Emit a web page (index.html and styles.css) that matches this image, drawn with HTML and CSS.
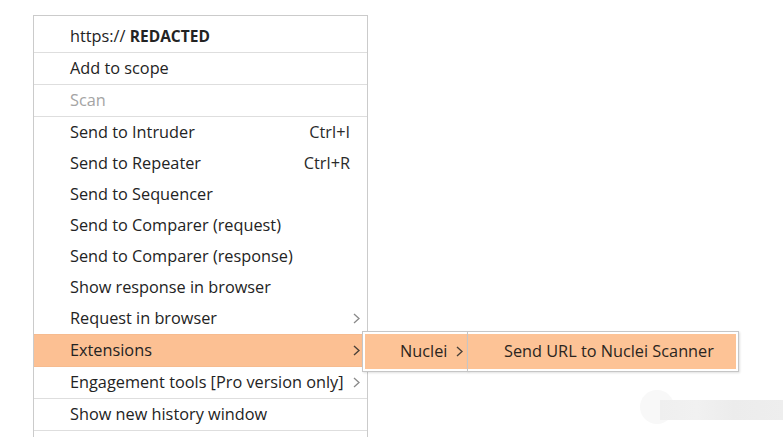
FILE: index.html
```html
<!DOCTYPE html>
<html lang="en">
<head>
<meta charset="utf-8">
<title>Context menu</title>
<link rel="stylesheet" href="styles.css">
</head>
<body>
<div class="menu">
  <div class="item sep"><span class="label">https:// <b class="redacted">REDACTED</b></span></div>
  <div class="item sep"><span class="label">Add to scope</span></div>
  <div class="item sep disabled"><span class="label">Scan</span></div>
  <div class="item"><span class="label">Send to Intruder</span><span class="key">Ctrl+I</span></div>
  <div class="item"><span class="label">Send to Repeater</span><span class="key">Ctrl+R</span></div>
  <div class="item"><span class="label">Send to Sequencer</span></div>
  <div class="item"><span class="label">Send to Comparer (request)</span></div>
  <div class="item"><span class="label">Send to Comparer (response)</span></div>
  <div class="item"><span class="label">Show response in browser</span></div>
  <div class="item sep"><span class="label">Request in browser</span><span class="key"></span><span class="arrow"><svg width="7" height="11" viewBox="0 0 7 11"><polyline points="1,1 6,5.5 1,10" fill="none" stroke="#8a8a8a" stroke-width="1.3"/></svg></span></div>
  <div class="item sep active"><span class="label">Extensions</span><span class="key"></span><span class="arrow"><svg width="7" height="11" viewBox="0 0 7 11"><polyline points="1,1 6,5.5 1,10" fill="none" stroke="#4a4038" stroke-width="1.4"/></svg></span>
    <div class="submenu sub1">
      <div class="subitem"><span>Nuclei</span><svg class="subarrow" width="7" height="11" viewBox="0 0 7 11"><polyline points="1,1 6,5.5 1,10" fill="none" stroke="#4a4038" stroke-width="1.4"/></svg></div>
    </div>
    <div class="submenu sub2">
      <div class="subitem wide"><span>Send URL to Nuclei Scanner</span></div>
    </div>
  </div>
  <div class="item sep"><span class="label">Engagement tools [Pro version only]</span><span class="key"></span><span class="arrow"><svg width="7" height="11" viewBox="0 0 7 11"><polyline points="1,1 6,5.5 1,10" fill="none" stroke="#8a8a8a" stroke-width="1.3"/></svg></span></div>
  <div class="item sep"><span class="label">Show new history window</span></div>
  <div class="item tail"></div>
</div>
<div class="watermark"><span class="wm-dot"></span><span class="wm-bar"></span></div>
</body>
</html>
```
FILE: styles.css
```css
html, body {
  margin: 0;
  padding: 0;
  background: #ffffff;
  overflow: hidden;
  height: 437px;
}
body {
  font-family: "Open Sans", "Noto Sans", sans-serif;
  font-size: 16.3px;
  color: #232323;
  position: relative;
}
.menu {
  margin: 15px 0 0 33px;
  width: 333px;
  border: 1px solid #cbcbcb;
  border-bottom: none;
  padding-top: 5px;
  background: #ffffff;
  display: flex;
  flex-direction: column;
}
.item {
  position: relative;
  height: 31px;
  line-height: 31px;
  display: grid;
  grid-template-columns: 1fr auto 17px;
  padding-left: 36px;
  white-space: nowrap;
}
.item.tail {
  height: 8px;
}
.item.sep {
  border-bottom: 1px solid #dedede;
}
.item.disabled {
  color: #a4a4a4;
}
.item.active {
  background: #fcc093;
  border-bottom-color: #f6bb8f;
  box-shadow: 0 -1px 0 #f6bb8f;
}
.redacted {
  font-weight: 700;
  font-size: 15.5px;
}
.key {
  text-align: right;
  color: #2a2a2a;
}
.arrow {
  display: flex;
  align-items: center;
  padding-left: 3px;
}
.submenu {
  position: absolute;
  top: -4px;
  height: 35px;
  border: 1px solid #c6c6c6;
  padding: 2px;
  background: #ffffff;
  box-shadow: 1px 1px 2px rgba(0, 0, 0, 0.12);
  display: flex;
}
.sub1 {
  left: 328px;
  width: 102px;
  padding-right: 0;
}
.sub2 {
  left: 433px;
  width: 268px;
  padding-left: 0;
}
.subitem {
  flex: 1;
  background: #fdc396;
  display: flex;
  align-items: center;
  padding-left: 35px;
  line-height: 35px;
  color: #2b2520;
}
.subarrow {
  margin-left: 9px;
}
.subitem.wide {
  padding-left: 36px;
}
.watermark {
  position: absolute;
  left: 640px;
  top: 388px;
  width: 143px;
  height: 36px;
}
.wm-dot {
  position: absolute;
  left: 0;
  top: 2px;
  width: 34px;
  height: 34px;
  border-radius: 50%;
  background: #f8f8f8;
}
.wm-bar {
  position: absolute;
  left: 20px;
  top: 12px;
  width: 123px;
  height: 20px;
  background: linear-gradient(90deg, #efefef 0, #f1f1f1 30%, #ececec 60%, #eeeeee 100%);
}
```
